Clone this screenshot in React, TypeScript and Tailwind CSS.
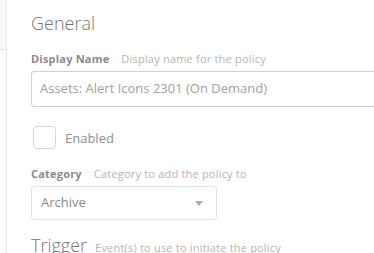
function FieldLabel({ label, hint }: { label: string; hint: string }) {
  return (
    <div className="flex items-baseline gap-[12px] text-[11px] leading-none">
      <span className="font-bold tracking-[0.2px] text-[#8a8a8a]">{label}</span>
      <span className="tracking-[0.2px] text-[#b4b4b4]">{hint}</span>
    </div>
  );
}

export default function App() {
  return (
    <div className="flex h-[253px] w-[374px] overflow-hidden bg-white font-['Open_Sans',sans-serif]">
      {/* left rail */}
      <div className="flex w-[7px] shrink-0 flex-col border-r border-[#e6e8eb]">
        <div className="h-[50px] border-b border-[#e3e5e8] bg-[#f6f7f9]" />
      </div>

      <div className="flex min-w-0 flex-1 flex-col pl-[24px] pt-[11px]">
        <h2 className="text-[18px] font-light leading-[24px] text-[#757575]">General</h2>

        <div className="mt-[18px]">
          <FieldLabel label="Display Name" hint="Display name for the policy" />
          <div className="mt-[7px] flex h-[36px] w-[380px] items-center rounded-[3px] border border-[#cfcfcf] px-[8px] text-[13px] text-[#a0a0a0]">
            Assets: Alert Icons 2301 (On Demand)
          </div>
        </div>

        <label className="mt-[19px] flex items-center gap-[9px] pl-[2px]">
          <span className="h-[23px] w-[23px] rounded-[4px] border border-[#d6d6d6]" />
          <span className="text-[13px] leading-[18px] text-[#8f8f8f]">Enabled</span>
        </label>

        <div className="mt-[19px]">
          <FieldLabel label="Category" hint="Category to add the policy to" />
          <div className="mt-[7px] flex h-[34px] w-[186px] items-center justify-between rounded-[4px] border border-[#e0e0e0] pl-[9px] pr-[13px] text-[13px] text-[#8a8a8a]">
            <span>Archive</span>
            <svg width="8" height="5" viewBox="0 0 8 5" className="fill-[#a6aab3]">
              <path d="M0 0h8L4 5z" />
            </svg>
          </div>
        </div>

        <div className="mt-[13px] flex items-baseline gap-[8px]">
          <span className="text-[18px] font-light leading-[24px] text-[#757575]">Trigger</span>
          <span className="text-[11px] tracking-[0.2px] text-[#b4b4b4]">Event(s) to use to initiate the policy</span>
        </div>
      </div>
    </div>
  );
}
